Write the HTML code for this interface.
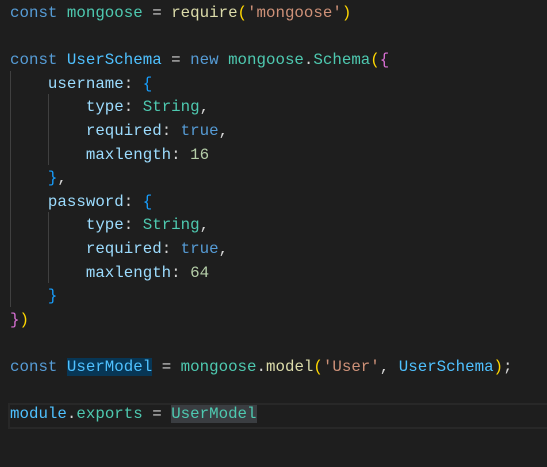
<!DOCTYPE html>
<html><head><style>
body{margin:0;background:#1e1e1e;width:547px;height:467px;overflow:hidden;position:relative}
.c{position:absolute;left:10px;top:2px;font-family:"Liberation Mono",monospace;font-size:15.8px;line-height:23.6px;color:#d4d4d4}
.l{height:23.6px;white-space:pre}
.k{color:#569cd6}.t{color:#4ec9b0}.v{color:#4fc1ff}.f{color:#dcdcaa}.s{color:#ce9178}.p{color:#9cdcfe}.n{color:#b5cea8}
.y{color:#ffd700}.m{color:#da70d6}.b{color:#179fff}
.g{position:absolute;width:1px;background:#404040}
.cur{position:absolute;left:8px;right:0;top:403px;height:22px;border:2px solid #282828;border-right:none}
.h1{background:#073655}.h2{background:#3a3d41}
</style></head><body>
<div class="cur"></div>
<div class="g" style="left:10px;top:71px;height:236px"></div>
<div class="g" style="left:48px;top:94px;height:71px"></div>
<div class="g" style="left:48px;top:212px;height:71px"></div>
<div class="c">
<div class="l"><span class="k">const</span> <span class="t">mongoose</span> = <span class="f">require</span><span class="y">(</span><span class="s">'mongoose'</span><span class="y">)</span></div>
<div class="l"> </div>
<div class="l"><span class="k">const</span> <span class="v">UserSchema</span> = <span class="k">new</span> <span class="t">mongoose</span>.<span class="t">Schema</span><span class="y">(</span><span class="m">{</span></div>
<div class="l">    <span class="p">username</span>: <span class="b">{</span></div>
<div class="l">        <span class="p">type</span>: <span class="t">String</span>,</div>
<div class="l">        <span class="p">required</span>: <span class="k">true</span>,</div>
<div class="l">        <span class="p">maxlength</span>: <span class="n">16</span></div>
<div class="l">    <span class="b">}</span>,</div>
<div class="l">    <span class="p">password</span>: <span class="b">{</span></div>
<div class="l">        <span class="p">type</span>: <span class="t">String</span>,</div>
<div class="l">        <span class="p">required</span>: <span class="k">true</span>,</div>
<div class="l">        <span class="p">maxlength</span>: <span class="n">64</span></div>
<div class="l">    <span class="b">}</span></div>
<div class="l"><span class="m">}</span><span class="y">)</span></div>
<div class="l"> </div>
<div class="l"><span class="k">const</span> <span class="v h1">UserModel</span> = <span class="t">mongoose</span>.<span class="f">model</span><span class="y">(</span><span class="s">'User'</span>, <span class="v">UserSchema</span><span class="y">)</span>;</div>
<div class="l"> </div>
<div class="l"><span class="v">module</span>.<span class="t">exports</span> = <span class="t h2">UserModel</span></div>
</div>
</body></html>
